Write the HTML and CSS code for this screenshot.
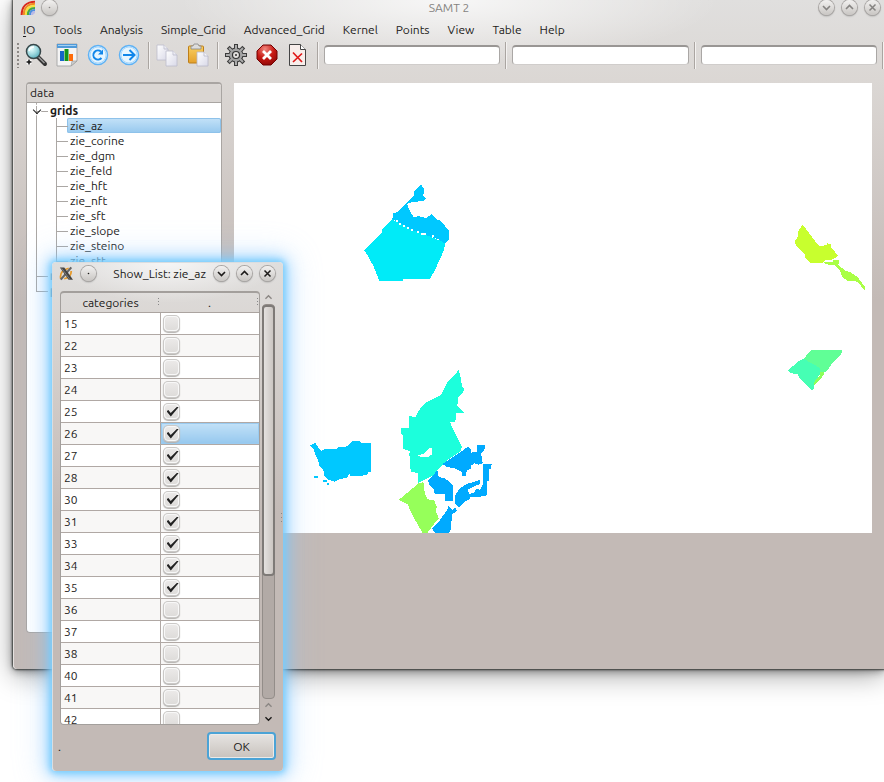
FILE: index.html
```html
<!DOCTYPE html>
<html lang="en">
<head>
<meta charset="utf-8">
<title>SAMT 2</title>
<link rel="stylesheet" href="styles.css">
</head>
<body>
<svg class="defs" aria-hidden="true">
  <defs>
    <linearGradient id="page" x1="0" y1="0" x2="1" y2="1"><stop offset="0" stop-color="#fff"/><stop offset="1" stop-color="#d9d9e8"/></linearGradient>
    <linearGradient id="board" x1="0" y1="0" x2="0" y2="1"><stop offset="0" stop-color="#f8cf62"/><stop offset="1" stop-color="#e5a12b"/></linearGradient>
    <radialGradient id="lens" cx=".35" cy=".3" r=".8"><stop offset="0" stop-color="#e9ffff"/><stop offset=".5" stop-color="#9fd9df"/><stop offset="1" stop-color="#4aa7b6"/></radialGradient>
    <radialGradient id="red" cx=".4" cy=".2" r=".9"><stop offset="0" stop-color="#f0877e"/><stop offset=".5" stop-color="#c81a14"/><stop offset="1" stop-color="#870505"/></radialGradient>
    <symbol id="down" viewBox="0 0 15 15"><path d="M4 6l3.500 3.500L11 6" fill="none" stroke="currentColor" stroke-width="1.600"/></symbol>
    <symbol id="up" viewBox="0 0 15 15"><path d="M4 9l3.500-3.500L11 9" fill="none" stroke="currentColor" stroke-width="1.600"/></symbol>
    <symbol id="close" viewBox="0 0 15 15"><path d="M4.500 4.500l6 6m0-6l-6 6" fill="none" stroke="currentColor" stroke-width="1.500"/></symbol>
    <symbol id="dot" viewBox="0 0 15 15"><circle cx="7.500" cy="7.500" r=".8" fill="currentColor"/></symbol>
  </defs>
</svg>

<main class="window">
  <header class="titlebar">
    <svg class="app-icon" viewBox="0 0 18 18" aria-hidden="true">
      <g fill="none" stroke-width="2.500">
        <path d="M2 18C2 8 8 2 18 2" stroke="#d9291c"/><path d="M4.500 18C4.500 9.500 9.500 4.500 18 4.500" stroke="#f08a24"/>
        <path d="M7 18C7 11 11 7 18 7" stroke="#f7e23a"/><path d="M9.500 18C9.500 12.500 12.500 9.500 18 9.500" stroke="#46a845"/>
        <path d="M12 18c0-4 2-6 6-6" stroke="#4d8fe0"/><path d="M14.500 18c0-2.500 1-3.500 3.500-3.500" stroke="#b8b8e8"/>
      </g>
    </svg>
    <button class="round" aria-label="Pin"><svg><use href="#dot"/></svg></button>
    <h1>SAMT 2</h1>
    <div class="controls">
      <button class="round" aria-label="Minimize"><svg><use href="#down"/></svg></button>
      <button class="round" aria-label="Maximize"><svg><use href="#up"/></svg></button>
      <button class="round" aria-label="Close"><svg><use href="#close"/></svg></button>
    </div>
  </header>

  <nav class="menubar">
    <button><u>I</u>O</button><button>Tools</button><button>Analysis</button><button>Simple_Grid</button><button>Advanced_Grid</button><button>Kernel</button><button>Points</button><button>View</button><button>Table</button><button>Help</button>
  </nav>

  <div class="toolbar">
    <span class="grip"></span>
    <button aria-label="Zoom"><svg viewBox="0 0 24 24">
      <path d="M14 14l7 7" stroke="#333" stroke-width="4" stroke-linecap="round"/><path d="M14.500 14l6 6" stroke="#999" stroke-width="1.500"/>
      <circle cx="9.500" cy="8.500" r="7" fill="url(#lens)" stroke="#37474a" stroke-width="1.500"/><path d="M5 8a5 5 0 0 1 5-4" fill="none" stroke="#fff" stroke-width="1.500"/>
      <path d="M5 16v6M2 19h6" stroke="#fff" stroke-width="3"/><path d="M5 16.500v5M2.500 19h5" stroke="#111" stroke-width="1.500"/></svg></button>
    <button aria-label="Chart"><svg viewBox="0 0 24 24">
      <path d="M2 1h20v17l-6 5H2z" fill="#f4f4f4" stroke="#aaa"/><path d="M2 1h20v4H2z" fill="#4f9ad9"/><path d="M3 2.500h18" stroke="#a5d1f2"/>
      <path d="M5 8h4v10H5z" fill="#1665c9"/><path d="M9.500 6h4v12h-4z" fill="#15951b"/><path d="M14 11h4v7h-4z" fill="#ff6c0a"/><path d="M16 23l1-5h5z" fill="#ccc" stroke="#999" stroke-width=".6"/></svg></button>
    <button aria-label="Refresh"><svg viewBox="0 0 24 24">
      <circle cx="12" cy="12" r="9.500" fill="#e6f5ff" stroke="#5eb2f5" stroke-width="1.500"/><circle cx="12" cy="12" r="8" fill="none" stroke="#a9d7fb"/>
      <path d="M15.500 15A4.600 4.600 0 1 1 15 8.500" fill="none" stroke="#1186ea" stroke-width="2"/><path d="M17 6.500v5h-5z" fill="#1186ea"/></svg></button>
    <button aria-label="Forward"><svg viewBox="0 0 24 24">
      <circle cx="12" cy="12" r="9.500" fill="#e6f5ff" stroke="#5eb2f5" stroke-width="1.500"/><circle cx="12" cy="12" r="8" fill="none" stroke="#a9d7fb"/>
      <path d="M6 12h11M12.500 7l5 5-5 5" fill="none" stroke="#1186ea" stroke-width="2"/></svg></button>
    <i class="sep"></i>
    <button aria-label="Copy"><svg viewBox="0 0 24 24">
      <g fill="url(#page)" stroke="#bcbccb" stroke-width=".8"><path d="M2 2h7l4 4v11H2z"/><path d="M9 2v4h4"/><path d="M11 8h7l4 4v11H11z"/><path d="M18 8v4h4"/></g></svg></button>
    <button aria-label="Paste"><svg viewBox="0 0 24 24">
      <rect x="2.500" y="3" width="15" height="17" rx="1" fill="url(#board)" stroke="#bd7e19"/><path d="M5 3h2l1-2h4l1 2h2v3H5z" fill="#ddd" stroke="#888" stroke-width=".8"/>
      <path d="M11 9h7l4 4v10H11z" fill="url(#page)" stroke="#b8b8c8" stroke-width=".8"/><path d="M18 9v4h4" fill="#f5f5fa" stroke="#b8b8c8" stroke-width=".8"/></svg></button>
    <i class="sep"></i>
    <button aria-label="Settings"><svg viewBox="0 0 24 24">
      <g stroke="#3c3c3c" stroke-width="4"><path d="M12 1v22M1 12h22M4.200 4.200l15.600 15.600M19.800 4.200L4.200 19.800"/></g>
      <circle cx="12" cy="12" r="7.500" fill="#3c3c3c"/><g stroke="#aaa" stroke-width="2"><path d="M12 2v20M2 12h20M5 5l14 14M19 5L5 19"/></g>
      <circle cx="12" cy="12" r="6.500" fill="#a2a2a2"/><circle cx="12" cy="12" r="3.500" fill="#e3e0de" stroke="#333" stroke-width="1.200"/><circle cx="12" cy="12" r="1" fill="#333"/></svg></button>
    <button aria-label="Stop"><svg viewBox="0 0 24 24">
      <path d="M8 2h8l6 6v8l-6 6H8l-6-6V8z" fill="url(#red)" stroke="#730000"/><path d="M8 8l8 8m0-8l-8 8" stroke="#fff" stroke-width="2.800"/></svg></button>
    <button aria-label="Delete page"><svg viewBox="0 0 24 24">
      <path d="M3.500 1.500h11l5 5v16h-16z" fill="#f8eeeb" stroke="#444"/><path d="M14.500 1.500v5h5" fill="#fff" stroke="#444"/><path d="M7 9.500l9 9.500m0-8.500L7 19" stroke="#e01818" stroke-width="1.700"/></svg></button>
    <i class="sep"></i>
    <input type="text" aria-label="Field 1">
    <i class="sep"></i>
    <input type="text" aria-label="Field 2">
    <i class="sep"></i>
    <input type="text" aria-label="Field 3">
    <i class="sep"></i>
  </div>

  <div class="workspace">
    <section class="tree">
      <h2>data</h2>
      <ul>
        <li class="open"><b>grids</b>
          <ul>
            <li class="selected"><span>zie_az</span></li>
            <li><span>zie_corine</span></li>
            <li><span>zie_dgm</span></li>
            <li><span>zie_feld</span></li>
            <li><span>zie_hft</span></li>
            <li><span>zie_nft</span></li>
            <li><span>zie_sft</span></li>
            <li><span>zie_slope</span></li>
            <li><span>zie_steino</span></li>
            <li><span>zie_stt</span></li>
          </ul>
        </li>
        <li><b>m</b></li>
        <li><b>p</b></li>
      </ul>
    </section>
    <svg class="map" viewBox="234 83 638 450" role="img" aria-label="Map">
      <path fill="#fff" d="M234 83h638v450H234z"/>
      <g transform="translate(350 170) scale(.33333)">
        <path fill="#00ebf8" d="M43 241L96 188V178L127 148 190 182 240 200 285 218 283 238 265 278 255 300 240 327H158V333H88L80 312 70 288 52 255z"/>
        <path fill="#00c8ff" d="M212 43L222 55 220 78 228 85 220 94 190 95 171 102 180 125 192 142 205 138 228 144 244 133 262 150 272 152 285 168 298 183 297 210 285 221 265 208 230 196 185 180 150 160 127 148 130 130 140 127 165 103 190 80 193 65z"/>
        <path fill="#fff" d="M138 151h7v6h-7zM146 158h6v6h-6zM158 164h6v6h-6zM171 171h6v6h-6zM183 177h6v6h-6zM202 183h6v6h-6zM214 189h13v6h-13zM246 195h7v6h-7z"/>
      </g>
      <g transform="translate(300 360) scale(.33333)">
        <path fill="#00c8ff" d="M30 256L46 248 54 262 64 272 76 266H110L116 261H138L150 250 160 242H180L182 248H213V335H205L203 343 180 349H150L148 338 143 352 118 358 104 365 82 358 72 348 70 328 58 318 54 300 46 285 42 268zM42 349h12v5H42zM68 361h12v5H68zM80 368h7v6h-7z"/>
        <path fill="#1cffdc" fill-rule="evenodd" d="M476 28L482 52 486 78 492 85 490 98 474 112 472 138 492 158 468 160 466 186 450 187 470 230 486 262 480 275 440 302 410 332 404 345 354 369V340L332 334 328 280 330 274 308 266V226L302 218V205H326L328 168 346 172 360 146 380 126 422 106 442 68 466 44zM346 280L356 286 374 280 388 264 397 262V282L382 292H362z"/>
        <g fill="#00aaff">
          <path d="M428 312L460 290 490 270 504 260 514 270 512 278 530 276V255H555L553 270 543 280 548 310 536 314 524 310 512 318 514 326 500 332 498 348H485V336L466 326 440 320z"/>
          <path d="M550 312H575L573 325 568 328 567 362 562 364V406L530 412 512 410 508 418 490 428 478 442 466 432V405L480 385 500 372 520 366 540 360V372L520 380 505 388 506 402 522 398 530 385 540 390 548 375 550 345z"/>
          <path d="M384 362L400 345 412 330 416 350 436 356 460 376V422H434V402H404L402 388 390 378z"/>
          <path d="M396 506L420 480 440 452 446 438 456 450 466 444 472 452 455 464 454 506 446 519H406z"/>
        </g>
        <path fill="#96ff5a" d="M296 420L356 370 370 366 374 398 382 418 402 420 410 440 408 455 416 475 402 492 382 519H368L344 478 322 432z"/>
      </g>
      <g transform="translate(770 210) scale(.33333)">
        <path fill="#c8ff2e" d="M97 43L112 62 140 100 148 108 168 106 172 100 182 102 184 112 204 138 190 148 162 152 160 158H120L106 142 104 134 80 110 74 94 82 86 84 66z"/>
        <path fill="#aaff46" d="M162 155L188 156 190 150H208V158L204 165 226 182 240 186 262 200 284 230V240L262 216 250 212H232L216 200 210 180 194 166 164 162z"/>
        <path fill="#60ff96" d="M122 421H215V430L186 460 172 482 158 490 140 476 100 448z"/>
        <path fill="#46ffb4" d="M54 482L84 454 100 446 150 474 152 490 134 514 132 536 126 543 90 506 82 492 64 490z"/>
        <path fill="#8cff5a" d="M152 484L164 488 156 502 132 528 134 512 150 498z"/>
      </g>
    </svg>
  </div>
</main>

<section class="dialog" role="dialog" aria-labelledby="dialog-title">
  <header class="dialog-title">
    <svg class="x-icon" viewBox="0 0 16 16" aria-hidden="true"><path d="M11 2C3 4 1 9 2 14M14 5c0 5-3 8-8 9" fill="none" stroke="#e69a2b" stroke-width="2"/><path d="M14 1L2 15" stroke="#666" stroke-width="2.500"/><path d="M1 1h5l10 14h-5z" fill="#444"/><path d="M3 2l9.500 13" stroke="#888"/></svg>
    <button class="round" aria-label="Pin"><svg><use href="#dot"/></svg></button>
    <h2 id="dialog-title">Show_List: zie_az</h2>
    <button class="round" aria-label="Minimize"><svg><use href="#down"/></svg></button>
    <button class="round" aria-label="Maximize"><svg><use href="#up"/></svg></button>
    <button class="round" aria-label="Close"><svg><use href="#close"/></svg></button>
  </header>
  <div class="list">
    <div class="table-frame">
      <table>
        <thead><tr><th>categories</th><th>.</th></tr></thead>
        <tbody>
          <tr><td>15</td><td><input type="checkbox" aria-label="15"></td></tr>
          <tr><td>22</td><td><input type="checkbox" aria-label="22"></td></tr>
          <tr><td>23</td><td><input type="checkbox" aria-label="23"></td></tr>
          <tr><td>24</td><td><input type="checkbox" aria-label="24"></td></tr>
          <tr><td>25</td><td><input type="checkbox" aria-label="25" checked></td></tr>
          <tr><td>26</td><td class="current"><input type="checkbox" aria-label="26" checked></td></tr>
          <tr><td>27</td><td><input type="checkbox" aria-label="27" checked></td></tr>
          <tr><td>28</td><td><input type="checkbox" aria-label="28" checked></td></tr>
          <tr><td>30</td><td><input type="checkbox" aria-label="30" checked></td></tr>
          <tr><td>31</td><td><input type="checkbox" aria-label="31" checked></td></tr>
          <tr><td>33</td><td><input type="checkbox" aria-label="33" checked></td></tr>
          <tr><td>34</td><td><input type="checkbox" aria-label="34" checked></td></tr>
          <tr><td>35</td><td><input type="checkbox" aria-label="35" checked></td></tr>
          <tr><td>36</td><td><input type="checkbox" aria-label="36"></td></tr>
          <tr><td>37</td><td><input type="checkbox" aria-label="37"></td></tr>
          <tr><td>38</td><td><input type="checkbox" aria-label="38"></td></tr>
          <tr><td>40</td><td><input type="checkbox" aria-label="40"></td></tr>
          <tr><td>41</td><td><input type="checkbox" aria-label="41"></td></tr>
          <tr><td>42</td><td><input type="checkbox" aria-label="42"></td></tr>
        </tbody>
      </table>
    </div>
    <div class="scrollbar">
      <svg class="dim"><use href="#up"/></svg>
      <div class="track"><div class="thumb"></div></div>
      <svg class="dim"><use href="#up"/></svg>
      <svg><use href="#down"/></svg>
    </div>
  </div>
  <footer><span>.</span><button class="ok">OK</button></footer>
</section>
</body>
</html>
```
FILE: styles.css
```css
* { box-sizing: border-box; }
body {
  margin: 0;
  padding: 0 0 113px 13px;
  min-height: 100vh;
  display: flex;
  position: relative;
  overflow: hidden;
  background: #fff;
  color: #1d1b1a;
  font: 12px/15px Ubuntu, "Noto Sans", sans-serif;
}
h1, h2, ul { margin: 0; padding: 0; font: inherit; }
ul { list-style: none; }
button, input { font: inherit; color: inherit; margin: 0; }
button { padding: 0; border: 0; background: none; }
.defs { position: absolute; width: 0; height: 0; }

.window {
  flex: 1;
  min-width: 0;
  display: flex;
  flex-direction: column;
  border-left: 1px solid #e6e2e0;
  border-radius: 0 0 0 4px;
  background:
    radial-gradient(ellipse 270px 64px at 50% 0, rgba(255,255,255,.75), transparent),
    linear-gradient(#e0dfde, #dbd7d4 80px, #c3bab6 300px);
  box-shadow: 0 0 2px 1px #3a3c3a, 0 2px 8px rgba(0,0,0,.4), 0 6px 28px rgba(0,0,0,.36);
}
.titlebar { display: flex; align-items: flex-start; height: 20px; padding: 0 4px 0 5px; color: #858381; }
.titlebar h1 { flex: 1; text-align: center; padding: 0 0 0 22px; }
.app-icon { width: 17px; height: 15px; margin-right: 6px; }
.controls { display: flex; gap: 8px; }
.round {
  flex: none;
  width: 15px;
  height: 15px;
  border-radius: 50%;
  background: linear-gradient(#f2f1f0, #c9c6c3);
  box-shadow: 0 0 0 1px #aaa7a5, 0 1px 2px #888;
}
.round svg { display: block; width: 15px; height: 15px; }

.menubar { display: flex; gap: 18px; height: 20px; padding: 1px 9px 3px; }
.menubar button { white-space: nowrap; }
.menubar u { text-underline-offset: 2px; }

.toolbar { display: flex; align-items: center; height: 30px; padding: 0 0 0 2px; }
.toolbar button { flex: none; width: 24px; height: 24px; margin-right: 7px; }
.toolbar button svg { display: block; width: 24px; height: 24px; }
.grip { flex: none; width: 5px; height: 26px; margin-right: 3px; background: radial-gradient(circle, #8d8986 1px, transparent 1px) 0 0 / 4px 4px; }
.sep { flex: none; width: 2px; height: 27px; margin-right: 5px; background: linear-gradient(90deg, #aaa5a1 50%, #f4f2f1 50%); }
.sep:last-child { margin-right: 0; }
.toolbar input {
  flex: 1;
  min-width: 0;
  height: 20px;
  margin-right: 5px;
  border: 1px solid #aaa7a5;
  border-top: 2px solid #999694;
  border-bottom-color: #d0cdcb;
  border-radius: 4px;
  background: #fff;
}

.workspace { flex: 1; display: flex; align-items: flex-start; gap: 12px; padding: 12px 12px 36px; }
.tree {
  flex: none;
  align-self: stretch;
  width: 196px;
  border: 1px solid #a9a5a2;
  border-top-width: 2px;
  border-radius: 4px;
  background: #fff;
  overflow: hidden;
}
.tree h2 { height: 19px; padding: 1px 3px; background: #dad6d3; border-bottom: 1px solid #a9a5a2; }
.tree li { position: relative; line-height: 15px; }
.tree > ul > li { padding-left: 23px; }
.tree li::before { content: ""; position: absolute; left: 9px; top: 0; width: 11px; height: 8px; border-left: 1px solid #aba7a4; border-bottom: 1px solid #aba7a4; }
.tree li:not(:last-child)::after { content: ""; position: absolute; left: 9px; top: 0; bottom: 0; border-left: 1px solid #aba7a4; }
.tree ul ul { margin-left: -3px; }
.tree ul ul li { padding-left: 20px; }
.tree ul ul span { display: block; padding-left: 3px; border-radius: 2px; }
.tree .selected span { background: linear-gradient(#c4e2f8, #96c8ee); box-shadow: inset 0 0 0 1px #8ec2ea; }
.open > b::before { content: ""; position: absolute; left: 7px; top: 4px; width: 5px; height: 5px; border: solid #222; border-width: 0 1px 1px 0; transform: rotate(45deg); box-shadow: 0 0 0 1px #fff; z-index: 1; }
.map { flex: 1; min-width: 0; margin-top: 1px; shape-rendering: crispEdges; }

.dialog {
  position: absolute;
  left: 52px;
  top: 262px;
  width: 231px;
  padding: 0 8px 11px 7px;
  border: 1px solid #d9dde0;
  border-width: 1px 0 0 1px;
  border-radius: 4px;
  background: radial-gradient(ellipse 110px 40px at 50% 0, rgba(255,255,255,.7), transparent), linear-gradient(#dfdedd, #dad6d3 60px, #c3bab6 250px);
  box-shadow: 0 0 6px 2px #78cdfc, 0 0 16px 4px rgba(120,200,255,.7), 0 0 32px 8px rgba(150,200,255,.3);
}
.dialog::after { content: ""; position: absolute; right: 1px; top: 250px; width: 1px; height: 9px; background: repeating-linear-gradient(#888 0 1px, transparent 1px 4px); }
.dialog-title { display: flex; align-items: center; gap: 8px; height: 28px; padding: 0 0 8px; }
.dialog-title h2 { flex: 1; text-align: right; white-space: nowrap; }
.x-icon { flex: none; width: 14px; height: 15px; margin-left: -1px; }
.list { display: flex; gap: 2px; height: 434px; }
.table-frame { flex: 1; overflow: hidden; border: 1px solid #a39f9c; border-top-width: 2px; border-radius: 4px; }
table { width: 100%; table-layout: fixed; border-collapse: collapse; }
th { height: 19px; padding: 0; font-weight: normal; background: repeating-linear-gradient(#888 0 1px, transparent 1px 3px) right 1px center / 1px 9px no-repeat; border-bottom: 1px solid #aba4a0; }
td { height: 22px; padding: 0 0 0 3px; background: #fff; border-bottom: 1px solid #b0a8a4; }
td + td { padding: 0 0 0 3px; border-left: 1px solid #b0a8a4; }
tr:nth-child(even) td { background: #f8f7f6; }
tr td.current { background: linear-gradient(#c4e2f8, #96c8ee); box-shadow: inset 0 0 0 1px #9acbf0; }
td input {
  appearance: none;
  display: block;
  position: relative;
  width: 15px;
  height: 15px;
  border: 1px solid #f8f8f8;
  border-radius: 4px;
  background: linear-gradient(#ebe9e8, #dedcda);
  box-shadow: 0 0 0 1px #cbc9c7, 0 1px 1px 1px #b4b2b0;
}
td input:checked::after { content: ""; position: absolute; left: 2px; top: 2px; width: 12px; height: 10px; background: #222; clip-path: polygon(0 48%, 16% 36%, 35% 65%, 90% 0, 100% 8%, 36% 100%); }

.scrollbar { width: 13px; display: flex; flex-direction: column; align-items: center; }
.scrollbar svg { flex: none; width: 15px; height: 13px; }
.scrollbar .dim { color: #8b8784; }
.track { flex: 1; width: 13px; border: 1px solid #938d89; border-radius: 4px; background: #b2aaa6; }
.thumb { height: 69%; margin: 0 -1px; border: 2px solid #7e7a77; border-radius: 4px; background: linear-gradient(90deg, #e4e1df, #cbc6c2); }
footer { display: flex; justify-content: space-between; align-items: center; padding-top: 7px; margin-right: -1px; }
footer span { margin-left: -2px; }
.ok { width: 69px; height: 28px; border: 2px solid #4ba3d6; border-radius: 4px; background: linear-gradient(#e6e4e2, #c8c2bd); box-shadow: inset 0 0 0 1px #eceae8; }
```
